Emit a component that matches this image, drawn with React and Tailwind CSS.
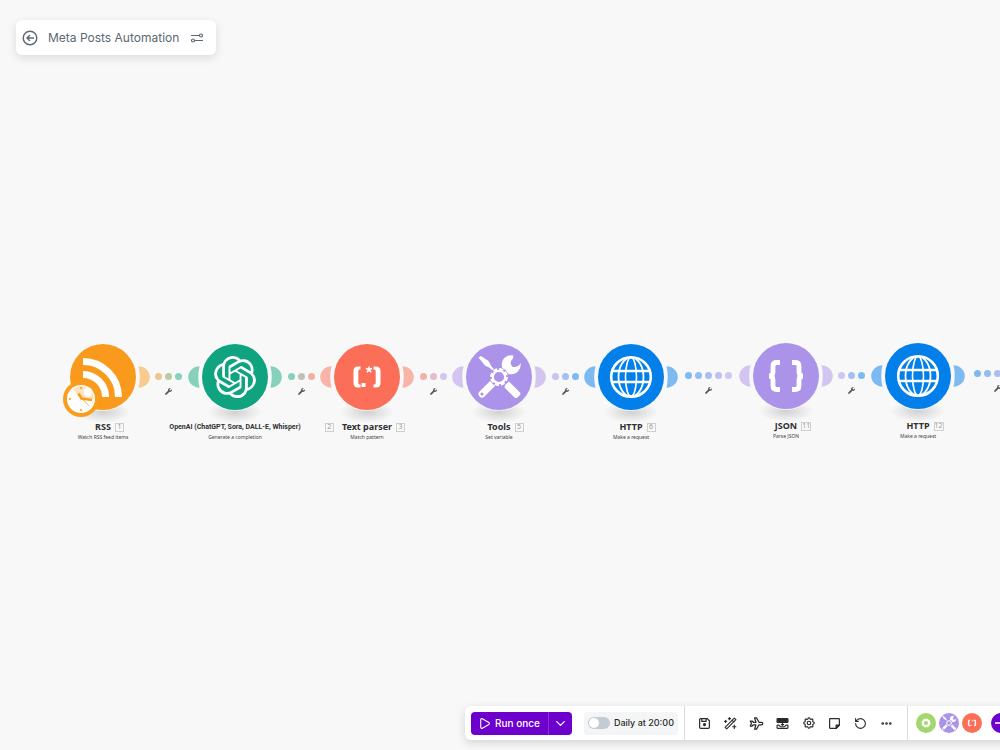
import React, { useState } from 'react';
import { SiOpenai } from 'react-icons/si';
import { FaWrench } from 'react-icons/fa';
import { TbPlane, TbSettings } from 'react-icons/tb';
import { ChevronDown, Ellipsis, Play, RotateCcw } from 'lucide-react';

const RssIcon = () => (
    <g>
        <g fill="none" stroke="#fff" strokeWidth="7">
            <path d="M-20 -15.5A35.5 35.5 0 0 1 15.5 20" />
            <path d="M-20 -2.5A22.5 22.5 0 0 1 2.5 20" />
        </g>
        {/* schedule clock on the trigger module */}
        <circle cx="-22" cy="22" r="18" fill="#f99d1c" />
        <circle cx="-22" cy="22" r="14" fill="#fff" />
        <path d="M-22 22L-30 12A13 13 0 0 1 -10 17L-9 22Z" fill="#fde3bd" />
        <circle cx="-15" cy="15" r="4.5" fill="#fff" />
        <path d="M-24.5 16.5L-21.5 21.5L-11 23" fill="none" stroke="#f99d1c" strokeWidth="2.6" />
        <path d="M-23 20L-13.5 29" stroke="#f99d1c" strokeWidth="0.8" />
        <g fill="#f99d1c">
            <circle cx="-22" cy="11" r="1" />
            <circle cx="-22" cy="33" r="1" />
            <circle cx="-33" cy="22" r="1" />
        </g>
    </g>
);

const OpenAiIcon = () => (
    <g transform="translate(-21 -21)">
        <SiOpenai size="42" color="#fff" />
    </g>
);

const ParserIcon = () => (
    <g fill="#fff">
        <path d="M-6.5 -10.5H-9Q-13.5 -10.5 -13.5 -6V6Q-13.5 10.5 -9 10.5H-6.5V7.5H-7.5Q-8.7 7.5 -8.7 5.5V-5.5Q-8.7 -7.5 -7.5 -7.5H-6.5Z" />
        <path d="M6.5 -10.5H9Q13.5 -10.5 13.5 -6V6Q13.5 10.5 9 10.5H6.5V7.5H7.5Q8.7 7.5 8.7 5.5V-5.5Q8.7 -7.5 7.5 -7.5H6.5Z" />
        <rect x="-5.5" y="6" width="4" height="4" />
        <path d="M2 -10.5V-7.5M2 -7.5L5 -8.5M2 -7.5L4 -4.7M2 -7.5L0 -4.7M2 -7.5L-1 -8.5" stroke="#fff" strokeWidth="1.6" />
    </g>
);

const ToolsIcon = ({ color = '#ab93ea' }) => (
    <g fill="#fff">
        <path d="M-20.5 -19.5L-18 -21L-10.5 -16L-7.5 -10.5L-5 -8L-6.5 -6.5L-9 -9L-14 -11.5Z" />
        <path d="M6 8L10 4.5L21 15.5Q22 17 20.5 18.5L18.5 20.5Q17 21.5 15.5 20.5L5.5 10.5Z" />
        <path d="M-17 17L-6 6" stroke="#fff" strokeWidth="7" strokeLinecap="round" />
        <circle cx="-17" cy="17" r="1.6" fill={color} />
        <path d="M5 -5L10 -10" stroke="#fff" strokeWidth="6" />
        <path d="M14.5 -21.5A9.5 9.5 0 1 0 21.5 -14L20.5 -12Q17 -9 13 -10.5Q10 -15 14 -18.5Z" />
        <circle r="9.5" fill={color} />
        <circle r="7.6" fill="none" stroke="#fff" strokeWidth="2.6" strokeDasharray="3.98 1.99" />
        <circle r="6.2" fill={color} stroke="#fff" strokeWidth="2.2" />
    </g>
);

const GlobeIcon = () => (
    <g fill="none" stroke="#fff">
        <circle r="19.8" strokeWidth="2.6" />
        <ellipse rx="12.5" ry="19.5" strokeWidth="1.8" />
        <ellipse rx="5.5" ry="19.5" strokeWidth="1.6" />
        <path d="M-19 -6H19M-19 5H19" strokeWidth="2.6" />
    </g>
);

const BracesIcon = () => (
    <g fill="none" stroke="#fff" strokeWidth="4.8">
        <path d="M-6 -13.5H-9Q-13 -13.5 -13 -10V-4Q-13 0 -17 0Q-13 0 -13 4V10Q-13 13.5 -9 13.5H-6" />
        <path d="M6 -13.5H9Q13 -13.5 13 -10V-4Q13 0 17 0Q13 0 13 4V10Q13 13.5 9 13.5H6" />
    </g>
);

const MODULES = [
    { id: 1, x: 103, y: 377, title: 'RSS', action: 'Watch RSS feed items', color: '#f99a1c', soft: '#facb91', Icon: RssIcon, first: true },
    { id: 2, x: 235, y: 377, title: 'OpenAI (ChatGPT, Sora, DALL-E, Whisper)', action: 'Generate a completion', color: '#10a37f', soft: '#87d0bc', Icon: OpenAiIcon, long: true },
    { id: 3, x: 367, y: 377, title: 'Text parser', action: 'Match pattern', color: '#fb6f58', soft: '#f9b4a9', Icon: ParserIcon },
    { id: 5, x: 499, y: 377, title: 'Tools', action: 'Set variable', color: '#ab93ea', soft: '#d2c6f1', Icon: ToolsIcon },
    { id: 6, x: 631, y: 377, title: 'HTTP', action: 'Make a request', color: '#027fe9', soft: '#7dbaf1', Icon: GlobeIcon },
    { id: 11, x: 786, y: 376, title: 'JSON', action: 'Parse JSON', color: '#ab93ea', soft: '#d2c6f1', Icon: BracesIcon },
    { id: 12, x: 918, y: 376, title: 'HTTP', action: 'Make a request', color: '#027fe9', soft: '#7dbaf1', Icon: GlobeIcon },
];

const ROUTES = [
    { x: 158, y: 377, colors: ['#ecc78b', '#b9cba2', '#87d0bc'] },
    { x: 291, y: 377, colors: ['#87d0bc', '#bfc2b2', '#f0b0a6'] },
    { x: 423, y: 377, colors: ['#f5afa6', '#e4bccb', '#d2c6f1'] },
    { x: 555, y: 377, colors: ['#cbc3f0', '#a5c0f0', '#7dbaf1'] },
    { x: 688, y: 376, colors: ['#7dbaf1', '#92bdf1', '#a8c0f1', '#bdc3f1', '#d0c6f1'] },
    { x: 841, y: 376, colors: ['#d2c6f1', '#a5c0f0', '#7dbaf1'] },
    { x: 977, y: 374, colors: ['#7dbaf1', '#92bdf1', '#a8c0f1', '#bdc3f1', '#d0c6f1'] },
];

function Module({ module }) {
    const { id, x, y, title, action, color, soft, Icon, first, long } = module;

    return (
        <div className="absolute flex w-[180px] -translate-x-1/2 flex-col items-center" style={{ left: x, top: y - 33 }}>
            <button type="button" aria-label={`${title} module`} className="relative size-[66px] rounded-full">
                <svg viewBox="-33 -33 66 66" className="size-full overflow-visible">
                    <defs>
                        <radialGradient id={`shade-${id}`}>
                            <stop offset="0" stopColor="#000" stopOpacity="0.16" />
                            <stop offset="1" stopColor="#000" stopOpacity="0" />
                        </radialGradient>
                    </defs>
                    <ellipse cy="35" rx="27" ry="11" fill={`url(#shade-${id})`} />
                    {!first && <path d="M-35.5 -10.7A11.3 10.7 0 0 0 -35.5 10.7Q-38 0 -35.5 -10.7Z" fill={soft} />}
                    <path d="M35.5 -10.7A11.3 10.7 0 0 1 35.5 10.7Q38 0 35.5 -10.7Z" fill={soft} />
                    <circle r="34" fill="#f8f8f8" fillOpacity="0.7" />
                    <circle r="33" fill={color} />
                    <Icon />
                </svg>
            </button>
            <div className="relative mt-[11px] flex h-3 items-center whitespace-nowrap font-bold text-[#303030]">
                <span className={long ? 'font-[Roboto,sans-serif] text-[7px]' : 'text-[9px]'}>{title}</span>
                <span className={`absolute left-full flex h-[9px] min-w-[9px] items-center justify-center border border-[#cfcfcf] text-[7px] font-normal text-[#9a9a9a] ${long ? 'ml-6' : 'ml-1'}`}>
                    {id}
                </span>
            </div>
            <span className="h-2 whitespace-nowrap text-[5px] leading-[8px] text-[#444]">{action}</span>
        </div>
    );
}

function Route({ route }) {
    return (
        <div className="absolute flex -translate-y-1 flex-col items-center gap-2" style={{ left: route.x - 3, top: route.y }}>
            <div className="flex gap-[3px]">
                {route.colors.map((color, i) => (
                    <span key={i} className="size-[7px] rounded-full" style={{ backgroundColor: color }} />
                ))}
            </div>
            <FaWrench className="size-[7px] text-[#555]" />
        </div>
    );
}

function SaveIcon() {
    return (
        <svg viewBox="0 0 24 24" fill="none" stroke="currentColor" strokeWidth="2.2" strokeLinejoin="round" className="size-[13px]">
            <path d="M5 3H17L21 7V19A2 2 0 0 1 19 21H5A2 2 0 0 1 3 19V5A2 2 0 0 1 5 3Z" />
            <path d="M7 3V8H15V3" />
            <circle cx="12" cy="14" r="1.8" fill="currentColor" />
        </svg>
    );
}

function WandIcon() {
    return (
        <svg viewBox="0 0 24 24" fill="none" stroke="currentColor" strokeWidth="2" strokeLinecap="round" strokeLinejoin="round" className="size-[13px]">
            <path d="M19 2L22 5L5 22L2 19Z" />
            <path d="M15 6L18 9" />
            <path d="M10 1V5M8 3H12M3 6V10M1 8H5M19 15V21M16 18H22" />
        </svg>
    );
}

function AlignIcon() {
    return (
        <svg viewBox="0 0 24 24" fill="none" stroke="currentColor" strokeWidth="2.2" strokeLinejoin="round" className="size-[13px]">
            <rect x="2" y="3" width="20" height="7" rx="1" fill="currentColor" />
            <path d="M12 10V16M9 14H15" />
            <path d="M6 15H3Q2 15 2 16V20Q2 21 3 21H21Q22 21 22 20V16Q22 15 21 15H18M6 15Q7 18 9 18H15Q17 18 18 15" />
        </svg>
    );
}

function NoteIcon() {
    return (
        <svg viewBox="0 0 24 24" fill="none" stroke="currentColor" strokeWidth="2.2" strokeLinejoin="round" className="size-[13px]">
            <path d="M4 3H20A1 1 0 0 1 21 4V15L15 21H4A1 1 0 0 1 3 20V4A1 1 0 0 1 4 3Z" />
            <path d="M15 21V15H21Z" fill="currentColor" />
        </svg>
    );
}

const ACTIONS = [
    { label: 'Save', icon: <SaveIcon /> },
    { label: 'Auto-align', icon: <WandIcon /> },
    { label: 'Explain flow', icon: <TbPlane className="size-[15px]" /> },
    { label: 'Scenario inputs', icon: <AlignIcon /> },
    { label: 'Settings', icon: <TbSettings className="size-[14px]" /> },
    { label: 'Notes', icon: <NoteIcon /> },
    { label: 'Undo', icon: <RotateCcw className="size-[13px]" /> },
    { label: 'More', icon: <Ellipsis className="size-[13px]" strokeWidth={3} /> },
];

function Toolbar() {
    const [scheduled, setScheduled] = useState(false);

    return (
        <div className="absolute bottom-[10px] left-[465px] flex h-[34px] w-max items-center rounded-md bg-white font-[Inter,sans-serif] text-[#2b2b2b] shadow-[0_3px_10px_rgba(0,0,0,0.15)]">
            <div className="flex items-center gap-3 px-[6px]">
                <div className="flex h-[23px] overflow-hidden rounded bg-[#6d00cc] text-white">
                    <button type="button" className="flex items-center gap-1 pr-2 pl-[7px] text-[10px] font-medium">
                        <Play className="size-[13px]" />
                        Run once
                    </button>
                    <button type="button" aria-label="Run options" className="flex w-6 items-center justify-center border-l border-[#8a33d6]">
                        <ChevronDown className="size-[15px]" />
                    </button>
                </div>
                <label className="flex h-[23px] items-center gap-1 rounded bg-[#f4f5f7] px-1 text-[9px] font-medium">
                    <input
                        type="checkbox"
                        checked={scheduled}
                        onChange={() => setScheduled(!scheduled)}
                        className="h-3 w-[22px] appearance-none rounded-full bg-[#c3cbd3] before:m-px before:block before:size-[10px] before:rounded-full before:bg-white checked:bg-[#6d00cc] checked:before:ml-[11px]"
                    />
                    Daily at 20:00
                </label>
            </div>
            <div className="flex h-full items-center border-x border-[#dcdcdc] px-[7px]">
                {ACTIONS.map(({ label, icon }) => (
                    <button key={label} type="button" aria-label={label} className="flex h-6 w-[26px] items-center justify-center">
                        {icon}
                    </button>
                ))}
            </div>
            <div className="flex items-center gap-[3px] px-2">
                <button type="button" aria-label="Flow control" className="size-5 rounded-full bg-[#a4d66e]">
                    <svg viewBox="-33 -33 66 66" fill="none" stroke="#fff">
                        <circle r="10" strokeWidth="7" />
                        <circle r="14" strokeWidth="3" strokeDasharray="5.5 5.5" />
                    </svg>
                </button>
                <button type="button" aria-label="Tools" className="size-5 rounded-full bg-[#ab93ea]">
                    <svg viewBox="-30 -30 60 60"><ToolsIcon /></svg>
                </button>
                <button type="button" aria-label="Text parser" className="size-5 rounded-full bg-[#fb6f58]">
                    <svg viewBox="-33 -33 66 66"><ParserIcon /></svg>
                </button>
                <button type="button" aria-label="Add module" className="ml-[6px] flex size-5 items-center justify-center rounded-full bg-[#6d00cc]">
                    <svg viewBox="0 0 20 20" stroke="#fff" strokeWidth="1.5"><path d="M4 10H16M10 4V16" /></svg>
                </button>
            </div>
        </div>
    );
}

function Header() {
    return (
        <header className="absolute top-5 left-4 flex h-[35px] items-center rounded-md bg-white pr-3 pl-[6px] font-[Inter,sans-serif] text-[#5a6872] shadow-[0_3px_10px_rgba(0,0,0,0.12)]">
            <button type="button" aria-label="Back" className="mr-2">
                <svg viewBox="0 0 16 16" fill="none" stroke="currentColor" strokeWidth="1.4" strokeLinecap="round" strokeLinejoin="round" className="size-4">
                    <circle cx="8" cy="8" r="6.8" />
                    <path d="M11.5 8H5M7.5 5.5L5 8L7.5 10.5" />
                </svg>
            </button>
            <h1 className="px-[2px] text-[12px]">Meta Posts Automation</h1>
            <button type="button" aria-label="Scenario options" className="ml-[9px]">
                <svg viewBox="0 0 14 14" fill="none" stroke="currentColor" strokeWidth="1.2" strokeLinecap="round" className="size-[14px]">
                    <path d="M1.5 4.5H9.5M4.5 9.5H12.5" />
                    <circle cx="11" cy="4.5" r="1.5" />
                    <circle cx="3" cy="9.5" r="1.5" />
                </svg>
            </button>
        </header>
    );
}

export default function App() {
    return (
        <main className="relative h-screen overflow-hidden bg-[#f8f8f8] font-['Noto_Sans',sans-serif]">
            {ROUTES.map((route) => <Route key={route.x} route={route} />)}
            {MODULES.map((module) => <Module key={module.id} module={module} />)}
            <Header />
            <Toolbar />
        </main>
    );
}
